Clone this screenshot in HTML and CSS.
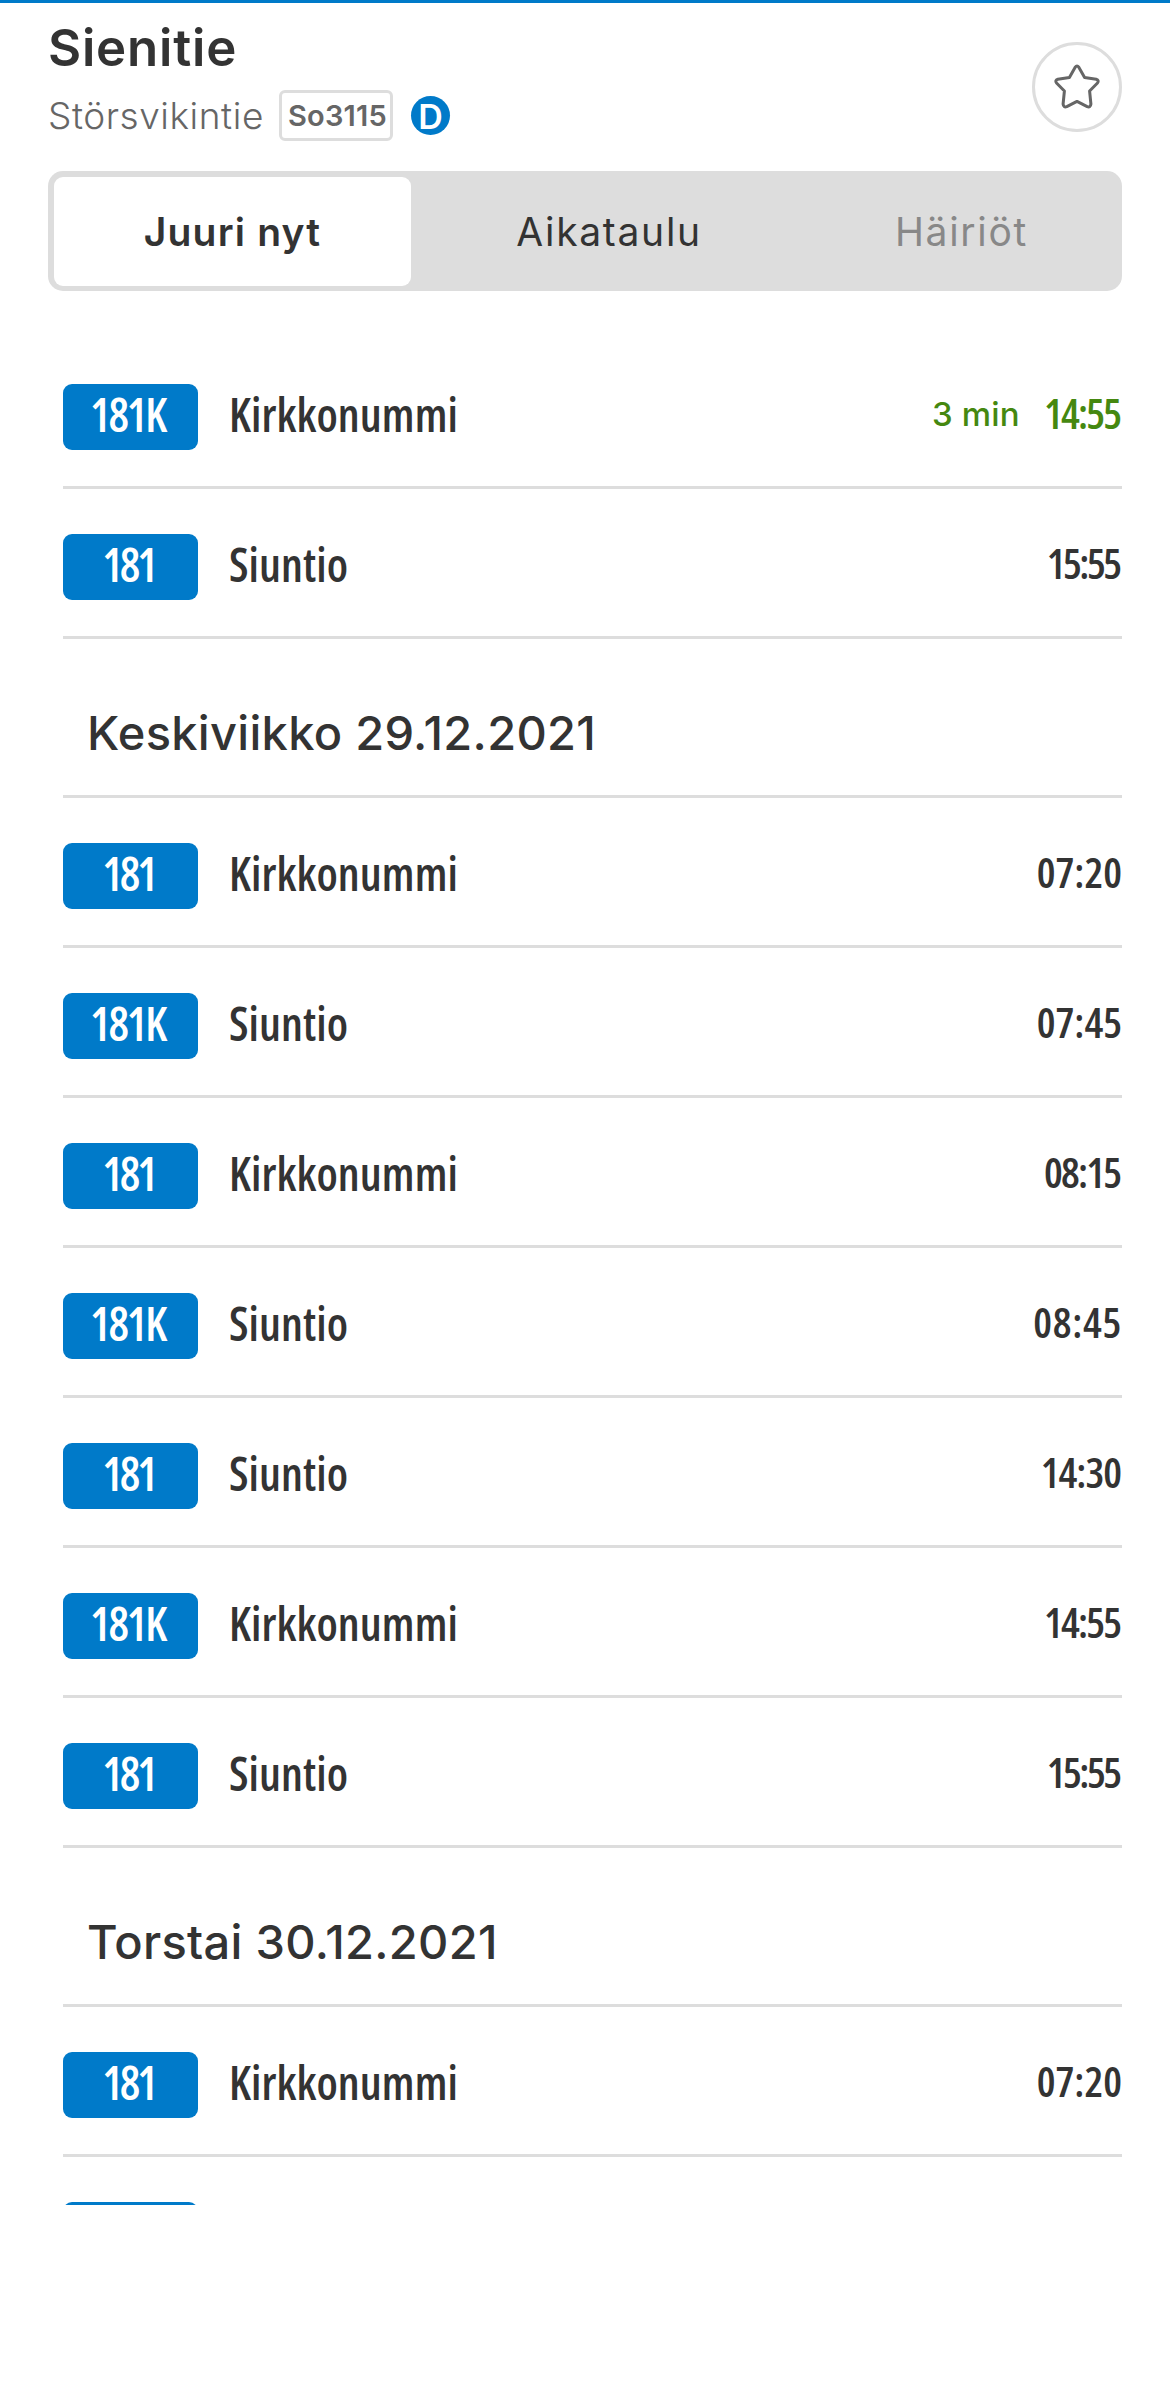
FILE: index.html
```
<!DOCTYPE html>
<html lang="fi">
<head>
<meta charset="utf-8">
<title>Sienitie</title>
<link rel="stylesheet" href="styles.css">
</head>
<body>
<main class="stop-page">
  <header class="stop-header">
    <div class="stop-info">
      <h1 class="stop-name">Sienitie</h1>
      <div class="stop-meta">
        <span class="stop-street">Störsvikintie</span>
        <span class="stop-code">So3115</span>
        <span class="stop-zone">D</span>
      </div>
    </div>
    <button class="favourite" aria-label="Suosikki">
      <svg class="star" viewBox="0 0 48 48" aria-hidden="true"><path d="M22.2 4.2Q24 1.8 25.8 4.2L31.6 14.6L43.2 16.3Q46.4 17.2 44.5 20L36.6 28L37.9 41Q37.5 44.8 34.2 43.6L24 38.4L13.8 43.6Q10.5 44.8 10.1 41L11.4 28L3.5 20Q1.6 17.2 4.8 16.3L16.4 14.6Z"/></svg>
    </button>
  </header>

  <nav class="tabs">
    <a class="tab tab-active">Juuri nyt</a>
    <a class="tab">Aikataulu</a>
    <a class="tab tab-disabled">Häiriöt</a>
  </nav>

  <section class="departures">
    <div class="departure"><span class="route route-k">181K</span><span class="destination">Kirkkonummi</span><span class="countdown">3 min</span><time class="time realtime t-narrow">14:55</time></div>
    <div class="departure"><span class="route">181</span><span class="destination">Siuntio</span><time class="time t-narrowest">15:55</time></div>
    <h2 class="day">Keskiviikko 29.12.2021</h2>
    <div class="departure"><span class="route">181</span><span class="destination">Kirkkonummi</span><time class="time">07:20</time></div>
    <div class="departure"><span class="route route-k">181K</span><span class="destination">Siuntio</span><time class="time">07:45</time></div>
    <div class="departure"><span class="route">181</span><span class="destination">Kirkkonummi</span><time class="time t-narrow">08:15</time></div>
    <div class="departure"><span class="route route-k">181K</span><span class="destination">Siuntio</span><time class="time t-wide">08:45</time></div>
    <div class="departure"><span class="route">181</span><span class="destination">Siuntio</span><time class="time t-snug">14:30</time></div>
    <div class="departure"><span class="route route-k">181K</span><span class="destination">Kirkkonummi</span><time class="time t-narrow">14:55</time></div>
    <div class="departure"><span class="route">181</span><span class="destination">Siuntio</span><time class="time t-narrowest">15:55</time></div>
    <h2 class="day">Torstai 30.12.2021</h2>
    <div class="departure"><span class="route">181</span><span class="destination">Kirkkonummi</span><time class="time">07:20</time></div>
    <div class="departure"><span class="route"></span></div>
  </section>
</main>
</body>
</html>
```
FILE: styles.css
```
* { box-sizing: border-box; }

body {
  margin: 0;
  background: #fff;
  color: #333;
  font-family: Inter, "Liberation Sans", sans-serif;
}

.stop-page {
  height: 2397px;
  overflow: hidden;
  border-top: 3px solid #007ac9;
  padding: 19px 48px 0;
}

.stop-header {
  display: flex;
  justify-content: space-between;
  align-items: flex-start;
  height: 149px;
}

.stop-name {
  margin: 0;
  font-size: 51px;
  font-weight: 600;
  line-height: 51px;
  letter-spacing: .8px;
}

.stop-meta {
  display: flex;
  align-items: center;
  height: 51px;
  margin-top: 17px;
}

.stop-street {
  width: 231px;
  color: #666;
  font-size: 37px;
  font-weight: 300;
  line-height: 51px;
  letter-spacing: .55px;
}

.stop-code {
  width: 114px;
  height: 51px;
  border: 3px solid #ddd;
  border-radius: 6px;
  color: #666;
  font-size: 29px;
  font-weight: 600;
  line-height: 45px;
  letter-spacing: .2px;
  padding-left: 6px;
}

.stop-zone {
  width: 39px;
  height: 39px;
  margin-left: 18px;
  border-radius: 50%;
  background: #007ac9;
  color: #fff;
  font-size: 34px;
  font-weight: 600;
  line-height: 41px;
  text-align: center;
}

.favourite {
  display: flex;
  align-items: center;
  justify-content: center;
  width: 90px;
  height: 90px;
  margin: 20px 0 0;
  padding: 0;
  border: 3px solid #ddd;
  border-radius: 50%;
  background: #fff;
}

.star {
  width: 48px;
  height: 48px;
  fill: none;
  stroke: #666;
  stroke-width: 3;
  stroke-linejoin: round;
}

.tabs {
  display: grid;
  grid-template-columns: 357px 396px 309px;
  height: 120px;
  padding: 6px;
  border-radius: 15px;
  background: #ddd;
}

.tab {
  border-radius: 9px;
  font-size: 39px;
  line-height: 109px;
  letter-spacing: 1.7px;
  text-align: center;
}

.tab-active {
  background: #fff;
  font-weight: 600;
  letter-spacing: 1.2px;
}

.tab-disabled { color: #888; }

.departures {
  height: 1866px;
  margin: 48px 0 0 15px;
  overflow: hidden;
}

.departure {
  display: flex;
  align-items: flex-start;
  height: 150px;
  padding-top: 45px;
  border-bottom: 3px solid #ddd;
}

.route,
.destination,
.time {
  font-family: "Open Sans", "Liberation Sans", sans-serif;
  font-stretch: 75%;
  font-weight: 600;
  white-space: nowrap;
}

.route {
  width: 135px;
  height: 66px;
  padding-right: 4px;
  border-radius: 9px;
  background: #007ac9;
  color: #fff;
  font-size: 46px;
  line-height: 61px;
  letter-spacing: -3px;
  text-align: center;
}

.route-k {
  padding-right: 6px;
  letter-spacing: -2.2px;
}

.destination {
  flex: 1;
  padding-left: 31px;
  font-size: 46px;
  line-height: 61px;
  letter-spacing: .1px;
}

.countdown {
  margin-right: 24px;
  color: #458810;
  font-size: 33px;
  font-weight: 500;
  line-height: 60px;
  letter-spacing: .2px;
}

.time {
  font-size: 42px;
  line-height: 58px;
}

.t-snug { letter-spacing: -1px; margin-right: 1px; }
.t-narrow { letter-spacing: -1.8px; margin-right: 1.8px; }
.t-narrowest { letter-spacing: -2.5px; margin-right: 2.5px; }
.t-wide { letter-spacing: .7px; }
.realtime { color: #458810; }

.day {
  height: 159px;
  margin: 0;
  padding: 64px 0 0 24px;
  border-bottom: 3px solid #ddd;
  font-size: 47px;
  font-weight: 550;
  line-height: 60px;
  letter-spacing: .3px;
}
```
